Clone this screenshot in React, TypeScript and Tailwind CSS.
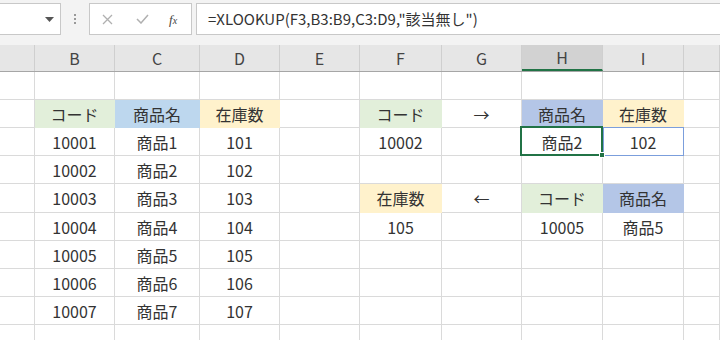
import React from "react";

const widths = [35, 80, 85, 80, 80, 82, 80, 81, 81, 36];
const letters = ["", "B", "C", "D", "E", "F", "G", "H", "I", ""];
const rowHeights = [28, 28, 28, 28, 29, 28, 28, 28, 28, 20];

type Cell = { t?: string; bg?: string; sel?: "green" | "blue" };

const G = "#e2efda";
const B = "#bdd7ee";
const Y = "#fff2cc";
const P = "#b4c6e7";

const data: Record<string, Cell> = {
  "1,1": { t: "コード", bg: G },
  "1,2": { t: "商品名", bg: B },
  "1,3": { t: "在庫数", bg: Y },
  "1,5": { t: "コード", bg: G },
  "1,6": { t: "→" },
  "1,7": { t: "商品名", bg: P },
  "1,8": { t: "在庫数", bg: Y },
  "2,5": { t: "10002" },
  "2,7": { t: "商品2", sel: "green" },
  "2,8": { t: "102", sel: "blue" },
  "4,5": { t: "在庫数", bg: Y },
  "4,6": { t: "←" },
  "4,7": { t: "コード", bg: G },
  "4,8": { t: "商品名", bg: P },
  "5,5": { t: "105" },
  "5,7": { t: "10005" },
  "5,8": { t: "商品5" },
};
for (let i = 0; i < 7; i++) {
  data[`${i + 2},1`] = { t: `1000${i + 1}` };
  data[`${i + 2},2`] = { t: `商品${i + 1}` };
  data[`${i + 2},3`] = { t: `${101 + i}` };
}

const font = { fontFamily: '"Noto Sans CJK JP", "Noto Sans", sans-serif' };

export default function App() {
  return (
    <div className="w-[720px] h-[340px] overflow-hidden bg-white text-[#333]" style={font}>
      {/* formula bar */}
      <div className="h-[45px] bg-[#f3f3f3] flex items-start pt-[3px]">
        <div className="w-[61px] h-[32px] bg-white border border-[#c8c8c8] border-l-0 flex items-center justify-end pr-[6px]">
          <svg width="9" height="5" viewBox="0 0 9 5">
            <path d="M0 0 L9 0 L4.5 5 Z" fill="#555" />
          </svg>
        </div>
        <div className="w-[28px] h-[32px] flex flex-col items-center justify-center gap-[2px]">
          <div className="w-[2px] h-[2px] bg-[#999]" />
          <div className="w-[2px] h-[2px] bg-[#999]" />
          <div className="w-[2px] h-[2px] bg-[#999]" />
        </div>
        <div className="w-[103px] h-[32px] bg-white border border-[#c8c8c8] flex items-center">
          <svg className="ml-[12px]" width="11" height="11" viewBox="0 0 11 11">
            <path d="M1 1 L10 10 M10 1 L1 10" stroke="#b0b0b0" strokeWidth="1.3" />
          </svg>
          <svg className="ml-[23px]" width="13" height="10" viewBox="0 0 13 10">
            <path d="M1 5 L5 9 L12 1" stroke="#b0b0b0" strokeWidth="1.5" fill="none" />
          </svg>
          <span
            className="ml-[20px] text-[13px] italic text-[#444] leading-none"
            style={{ fontFamily: '"Liberation Serif", serif' }}
          >
            f<span className="text-[10px]">x</span>
          </span>
        </div>
        <div className="ml-[4px] flex-1 h-[32px] bg-white border border-[#c8c8c8] border-r-0 flex items-center pl-[11px] text-[15px] text-[#333] whitespace-nowrap">
          =XLOOKUP(F3,B3:B9,C3:D9,"該当無し")
        </div>
      </div>
      {/* column headers */}
      <div className="flex h-[27px] bg-[#e6e6e6] border-b border-[#a6a6a6]">
        {widths.map((w, i) => (
          <div
            key={i}
            style={{ width: w }}
            className={
              "shrink-0 h-full flex items-center justify-center text-[16px] text-[#444] border-r border-[#cfcfcf] " +
              (i === 7 ? "bg-[#d2d2d2] border-b-2 border-b-[#217346]" : "")
            }
          >
            {letters[i]}
          </div>
        ))}
      </div>
      {/* rows */}
      {rowHeights.map((h, r) => (
        <div key={r} className="flex" style={{ height: h }}>
          {widths.map((w, c) => {
            const cell = data[`${r},${c}`] || {};
            return (
              <div
                key={c}
                style={{
                  width: w,
                  backgroundColor: cell.bg,
                  borderColor: cell.bg ? cell.bg : undefined,
                }}
                className="relative shrink-0 h-full flex items-center justify-center border-r border-b border-[#dadada] text-[16px]"
              >
                {cell.t}
                {cell.sel === "green" && (
                  <div className="absolute -left-[2px] -top-[2px] -right-[1px] -bottom-[1px] border-2 border-[#217346] z-10">
                    <div className="absolute -right-[4px] -bottom-[4px] w-[6px] h-[6px] bg-[#217346] border border-white" />
                  </div>
                )}
                {cell.sel === "blue" && (
                  <div className="absolute left-0 -top-[1px] -right-[1px] -bottom-[1px] border-[1.5px] border-[#7b9edc]" />
                )}
              </div>
            );
          })}
        </div>
      ))}
    </div>
  );
}
